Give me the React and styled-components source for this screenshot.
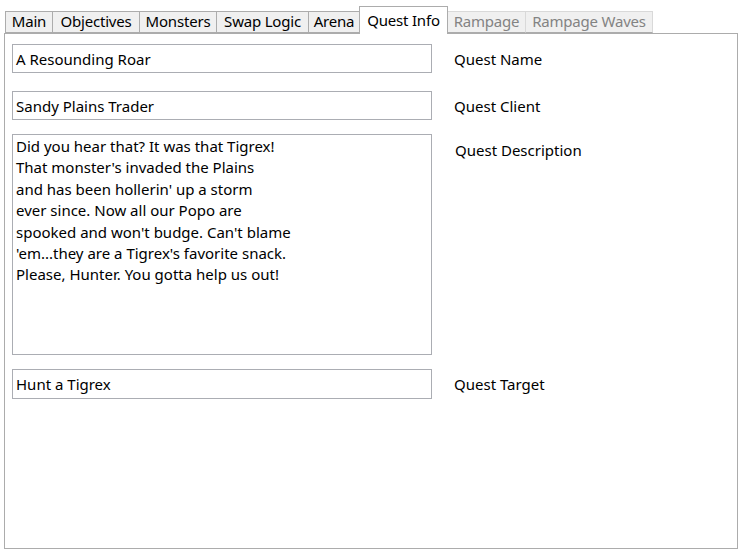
import React from "react";
import styled, { createGlobalStyle } from "styled-components";

const GlobalStyle = createGlobalStyle`
  html, body {
    margin: 0;
    padding: 0;
    background: #ffffff;
  }
  body {
    font-family: "Noto Sans", "Open Sans", sans-serif;
    color: #000000;
  }
`;

const Window = styled.div`
  width: 743px;
  height: 555px;
  padding: 0 5px 6px 4px;
  box-sizing: border-box;
  display: flex;
  flex-direction: column;
`;

const TabStrip = styled.div`
  display: flex;
  align-items: flex-end;
  height: 34px;
  padding-left: 1px;
  position: relative;
  z-index: 1;
`;

const Tab = styled.div`
  box-sizing: border-box;
  width: ${(p) => p.$w}px;
  height: ${(p) => (p.$active ? 28 : 22)}px;
  margin-left: -1px;
  margin-bottom: ${(p) => (p.$active ? 0 : 1)}px;
  display: flex;
  align-items: ${(p) => (p.$active ? "flex-start" : "center")};
  justify-content: center;
  padding-top: ${(p) => (p.$active ? 3 : 0)}px;
  padding-bottom: ${(p) => (p.$active ? 0 : 2)}px;
  font-size: 15px;
  letter-spacing: -0.2px;
  white-space: nowrap;
  border: 1px solid ${(p) => (p.$disabled ? "#d9d9d9" : "#acacac")};
  border-bottom: ${(p) => (p.$active ? "none" : "1px solid #acacac")};
  background: ${(p) => (p.$active ? "#ffffff" : "#f0f0f0")};
  color: ${(p) => (p.$disabled ? "#838383" : "#000000")};
  position: relative;
  z-index: ${(p) => (p.$active ? 2 : 1)};
  &:first-child {
    margin-left: 0;
  }
`;

const Panel = styled.div`
  flex: 1;
  margin-top: -1px;
  border: 1px solid #acacac;
  background: #ffffff;
  padding: 10px 7px;
  display: flex;
  flex-direction: column;
  gap: 14px;
`;

const Row = styled.div`
  display: flex;
  align-items: ${(p) => (p.$top ? "flex-start" : "center")};
  gap: 22px;
  margin-bottom: ${(p) => p.$mb || 0}px;
`;

const Field = styled.div`
  box-sizing: border-box;
  width: 420px;
  height: ${(p) => p.$h}px;
  border: 1px solid #abadb3;
  padding: ${(p) => (p.$multi ? "1px 3px" : "0 3px")};
  display: flex;
  align-items: ${(p) => (p.$multi ? "flex-start" : "center")};
  font-size: 15px;
  line-height: ${(p) => (p.$multi ? "21.4px" : "normal")};
  white-space: pre;
`;

const Label = styled.div`
  font-size: 15px;
  padding-top: ${(p) => (p.$top ? 6 : 0)}px;
  padding-left: ${(p) => (p.$top ? 1 : 0)}px;
`;

const tabs = [
  { name: "Main", w: 48 },
  { name: "Objectives", w: 88 },
  { name: "Monsters", w: 78 },
  { name: "Swap Logic", w: 93 },
  { name: "Arena", w: 52 },
  { name: "Quest Info", w: 89, active: true },
  { name: "Rampage", w: 79, disabled: true },
  { name: "Rampage Waves", w: 128, disabled: true },
];

const description = [
  "Did you hear that? It was that Tigrex!",
  "That monster's invaded the Plains",
  "and has been hollerin' up a storm",
  "ever since. Now all our Popo are",
  "spooked and won't budge. Can't blame",
  "'em...they are a Tigrex's favorite snack.",
  "Please, Hunter. You gotta help us out!",
].join("\n");

export default function App() {
  return (
    <>
      <GlobalStyle />
      <Window>
        <TabStrip>
          {tabs.map((t) => (
            <Tab key={t.name} $w={t.w} $active={t.active} $disabled={t.disabled}>
              {t.name}
            </Tab>
          ))}
        </TabStrip>
        <Panel>
          <Row $mb={4}>
            <Field $h={29}>A Resounding Roar</Field>
            <Label>Quest Name</Label>
          </Row>
          <Row>
            <Field $h={29}>Sandy Plains Trader</Field>
            <Label>Quest Client</Label>
          </Row>
          <Row $top>
            <Field $h={221} $multi>
              {description}
            </Field>
            <Label $top>Quest Description</Label>
          </Row>
          <Row>
            <Field $h={30}>Hunt a Tigrex</Field>
            <Label>Quest Target</Label>
          </Row>
        </Panel>
      </Window>
    </>
  );
}
